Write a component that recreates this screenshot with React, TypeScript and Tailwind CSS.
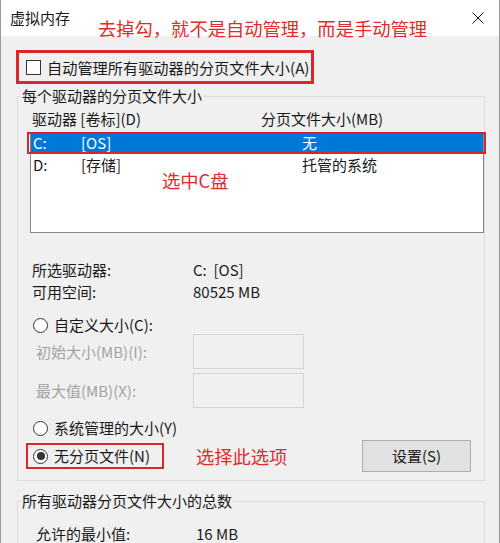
import React from 'react';

const font = { fontFamily: '"Noto Sans CJK SC", "Noto Sans", sans-serif' };

function Radio({ checked }: { checked?: boolean }) {
  return (
    <span className="flex h-[15px] w-[15px] shrink-0 items-center justify-center rounded-full border border-[#333333] bg-white">
      {checked && <span className="h-[8px] w-[8px] rounded-full bg-[#333333]" />}
    </span>
  );
}

function GroupLabel({ children }: { children: React.ReactNode }) {
  return (
    <div className="-mt-[11px] ml-[3px] w-fit bg-[#f0f0f0] px-[1px] text-[15px] leading-[20px] text-[#1a1a1a]">
      {children}
    </div>
  );
}

export default function App() {
  return (
    <div
      className="relative h-[543px] w-[500px] overflow-hidden border-x border-[#9a9a9a] bg-[#f0f0f0] text-[#1a1a1a]"
      style={font}
    >
      {/* title bar */}
      <div className="flex h-[36px] items-center bg-white pl-[9px]">
        <span className="text-[15px] leading-[20px]">虚拟内存</span>
        <svg className="ml-auto mr-[15px]" width="12" height="12" viewBox="0 0 12 12">
          <path d="M0.5 0.5 L11.5 11.5 M11.5 0.5 L0.5 11.5" stroke="#111" strokeWidth="1" fill="none" />
        </svg>
      </div>
      <div className="absolute left-[97px] top-[17px] text-[18.3px] leading-[22px] text-[#e32b2b]">
        去掉勾，就不是自动管理，而是手动管理
      </div>

      <div className="pl-[15px]">
        {/* auto manage checkbox */}
        <div className="mt-[14px] flex h-[34px] w-[298px] items-center border-[3px] border-[#d9262c] pl-[7px]">
          <span className="h-[15px] w-[15px] border border-[#333333] bg-white" />
          <span className="ml-[6px] text-[15.2px] leading-[20px]">自动管理所有驱动器的分页文件大小(A)</span>
        </div>

        {/* per drive group */}
        <div className="ml-[1px] mt-[12px] w-[468px] border border-[#dcdcdc] pb-[8px]">
          <GroupLabel>每个驱动器的分页文件大小</GroupLabel>
          <div className="pl-[12px]">
            <div className="mt-[4px] flex pl-[2px] text-[15px] leading-[18px]">
              <span className="w-[229px]">驱动器 [卷标](D)</span>
              <span>分页文件大小(MB)</span>
            </div>

            <div className="relative mt-[4px] h-[101px] w-[454px] border border-[#828790] bg-white pt-[1px]">
              <div className="flex h-[18px] bg-[#0078d7] pl-[2px] text-[15px] leading-[18px] text-white">
                <span className="w-[48px]">C:</span>
                <span className="w-[221px]">[OS]</span>
                <span>无</span>
              </div>
              <div className="mt-[4px] flex h-[18px] pl-[2px] text-[15px] leading-[18px]">
                <span className="w-[48px]">D:</span>
                <span className="w-[221px]">[存储]</span>
                <span>托管的系统</span>
              </div>
              <div className="absolute -left-[4px] -top-[1px] h-[22px] w-[459px] border-2 border-[#d9262c]" />
              <div className="absolute left-[131px] top-[36px] text-[18.3px] leading-[22px] text-[#e32b2b]">选中C盘</div>
            </div>

            <div className="mt-[26px] grid grid-cols-[161px_1fr] pl-[2px] text-[15px] leading-[22px]">
              <span>所选驱动器:</span>
              <span>C:&nbsp;&nbsp;[OS]</span>
              <span>可用空间:</span>
              <span>80525 MB</span>
            </div>

            <div className="mt-[11px] flex h-[22px] items-center pl-[3px]">
              <Radio />
              <span className="ml-[6px] text-[15px] leading-[22px]">自定义大小(C):</span>
            </div>

            <div className="-mt-[2px] flex h-[35px] items-center">
              <span className="w-[163px] pl-[6px] text-[15px] leading-[20px] text-[#a3a3a3]">初始大小(MB)(I):</span>
              <span className="h-[35px] w-[111px] border border-[#d4d4d4] bg-[#f0f0f0]" />
            </div>
            <div className="mt-[4px] flex h-[35px] items-center">
              <span className="w-[163px] pl-[6px] text-[15px] leading-[20px] text-[#a3a3a3]">最大值(MB)(X):</span>
              <span className="h-[35px] w-[111px] border border-[#d4d4d4] bg-[#f0f0f0]" />
            </div>

            <div className="mt-[9px] flex h-[22px] items-center pl-[3px]">
              <Radio />
              <span className="ml-[6px] text-[15px] leading-[22px]">系统管理的大小(Y)</span>
            </div>

            <div className="mt-[1px] flex h-[32px] items-center">
              <div className="-ml-[4px] flex h-[26px] w-[138px] items-center border-2 border-[#d9262c] pl-[5px]">
                <Radio checked />
                <span className="ml-[6px] text-[15px] leading-[20px]">无分页文件(N)</span>
              </div>
              <span className="ml-[32px] text-[18.3px] leading-[22px] text-[#e32b2b]">选择此选项</span>
              <button className="ml-auto mr-[13px] h-[32px] w-[109px] border border-[#adadad] bg-[#e1e1e1] text-[15px] leading-[20px]">
                设置(S)
              </button>
            </div>
          </div>
        </div>

        {/* totals group */}
        <div className="ml-[1px] mt-[20px] w-[468px] border border-[#dcdcdc] pb-[10px]">
          <GroupLabel>所有驱动器分页文件大小的总数</GroupLabel>
          <div className="mt-[12px] grid grid-cols-[160px_1fr] pl-[18px] text-[15px] leading-[22px]">
            <span>允许的最小值:</span>
            <span>16 MB</span>
          </div>
        </div>
      </div>
    </div>
  );
}
